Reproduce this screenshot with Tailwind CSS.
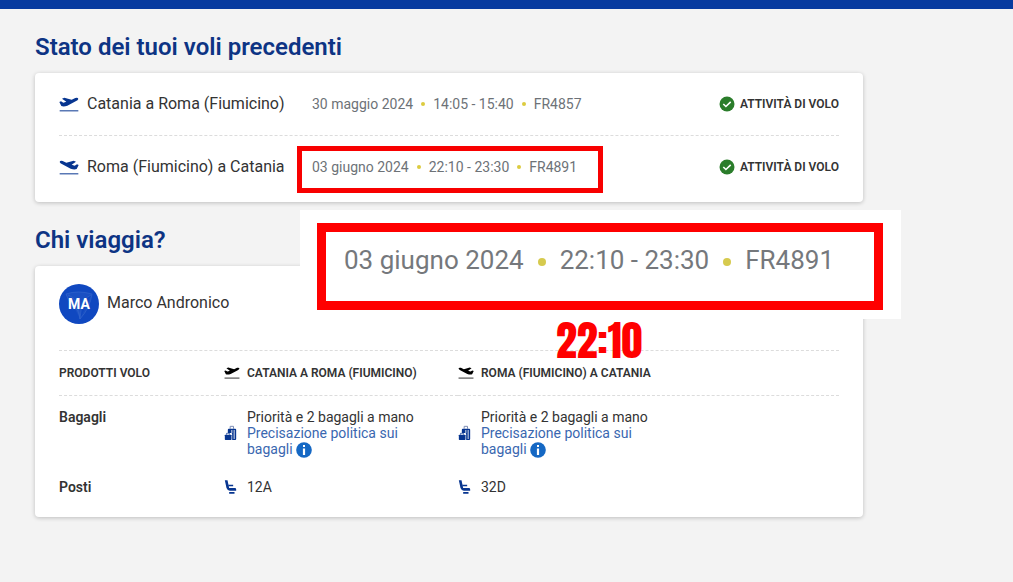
<!DOCTYPE html>
<html lang="it">
<head>
<meta charset="utf-8">
<meta name="viewport" content="width=device-width, initial-scale=1">
<title>I tuoi voli</title>
<script src="https://cdn.jsdelivr.net/npm/@tailwindcss/browser@4"></script>
</head>
<body class="relative min-h-screen bg-[#f3f3f3] font-['Roboto',sans-serif] text-[#333333]">
<svg class="hidden" aria-hidden="true">
  <symbol id="departure" viewBox="0 0 60 45">
    <path d="M1 15 L6 13 L13 17 L22 14 L9 5 L16 2 L38 8 L49 3 Q57 1 58 6 Q57 10 50 13 L25 26 Q14 30 7 27 Z"/>
    <path d="M2 40h56v3H2z"/>
  </symbol>
  <symbol id="arrival" viewBox="0 0 60 45">
    <path d="M59 15 L54 13 L47 17 L38 14 L51 5 L44 2 L22 8 L11 3 Q3 1 2 6 Q3 10 10 13 L35 26 Q46 30 53 27 Z"/>
    <path d="M2 40h56v3H2z"/>
  </symbol>
  <symbol id="check" viewBox="0 0 16 16">
    <circle cx="8" cy="8" r="7.5" fill="#2b7d2b"/>
    <path d="M4.3 8l2.6 2.5 4.8-4.6" fill="none" stroke="#fff" stroke-width="1.6"/>
  </symbol>
  <symbol id="bags" viewBox="0 0 36 48">
    <path d="M17 11V4h10v7" fill="none" stroke="#7d8db5" stroke-width="3"/>
    <path d="M13 11h19q3 0 3 3v28q0 3-3 3H23V27q0-3-3-3H10v-10q0-3 3-3z"/>
    <path d="M22 15v9M29 15v27" stroke="#fff" stroke-width="2.500"/>
    <path d="M3 29h16q2 0 2 2v12q0 2-2 2H3q-2 0-2-2V31q0-2 2-2z"/>
    <path d="M6 29v-4h9v4" fill="none" stroke="#073590" stroke-width="2"/>
  </symbol>
  <symbol id="seat" viewBox="0 0 36 42">
    <path d="M1 1h8l5 23H6z"/>
    <path d="M11 14h15v5H12zM11 24h20q4 0 4 4v4H16q-7 0-10-8zM14 36h16v5H14z"/>
  </symbol>
  <symbol id="info" viewBox="0 0 16 16">
    <circle cx="8" cy="8" r="7.8" fill="#1568c4"/>
    <path d="M7 3h2v2H7zM6.9 6.500h2.200V13H6.900z" fill="#fff"/>
  </symbol>
</svg>

<header class="h-[9px] bg-[#073b9f]"></header>

<main class="w-full max-w-[898px] px-[35px] pt-5">
  <section>
    <h1 class="text-2xl leading-9 font-semibold text-[#0d3484]">Stato dei tuoi voli precedenti</h1>
    <ul class="mt-2 rounded bg-white px-6 pb-1 shadow-[0_1px_4px_rgba(0,0,0,0.22)]">
      <li class="flex h-[63px] items-center border-b border-dashed border-[#dcdcdc]">
        <svg class="h-[15px] w-5 shrink-0 fill-[#073590]"><use href="#departure"/></svg>
        <span class="ml-2 w-[225px]">Catania a Roma (Fiumicino)</span>
        <span class="flex items-center gap-2 text-sm text-[#6d7277]">
          <span>30 maggio 2024</span><i class="size-1 rounded-full bg-[#dccb3f]"></i>
          <span>14:05 - 15:40</span><i class="size-1 rounded-full bg-[#dccb3f]"></i>
          <span>FR4857</span>
        </span>
        <span class="ml-auto flex items-center gap-[5px] text-xs font-semibold"><svg class="size-4"><use href="#check"/></svg>ATTIVITÀ DI VOLO</span>
      </li>
      <li class="flex h-[62px] items-center">
        <svg class="h-[15px] w-5 shrink-0 fill-[#073590]"><use href="#arrival"/></svg>
        <span class="ml-2 w-[225px]">Roma (Fiumicino) a Catania</span>
        <span class="flex items-center gap-2 text-sm text-[#6d7277]">
          <span>03 giugno 2024</span><i class="size-1 rounded-full bg-[#dccb3f]"></i>
          <span>22:10 - 23:30</span><i class="size-1 rounded-full bg-[#dccb3f]"></i>
          <span>FR4891</span>
        </span>
        <span class="ml-auto flex items-center gap-[5px] text-xs font-semibold"><svg class="size-4"><use href="#check"/></svg>ATTIVITÀ DI VOLO</span>
      </li>
    </ul>
  </section>

  <section class="mt-5">
    <h2 class="text-2xl leading-9 font-semibold text-[#0d3484]">Chi viaggia?</h2>
    <div class="mt-2 rounded bg-white px-6 pb-[14px] shadow-[0_1px_4px_rgba(0,0,0,0.22)]">
      <div class="flex h-[85px] items-start gap-2 border-b border-dashed border-[#dcdcdc] pt-[18px]">
        <div class="grid size-10 place-items-center rounded-full bg-[#1048c0] text-sm font-bold text-white">
          <svg class="col-start-1 row-start-1 size-10" viewBox="0 0 40 40" fill="#1a50c3" stroke="#3264cb" stroke-width="0.7"><path d="M7 10q12-4 26 0-2 14-12 25-1-9-7-14-5-4-7-11zM9 11q10 2 12 24M32 11q-10 3-11 24"/></svg>
          <span class="col-start-1 row-start-1">MA</span>
        </div>
        <span class="leading-[38px]">Marco Andronico</span>
      </div>
      <table class="w-full table-fixed border-collapse text-left text-sm">
        <colgroup><col class="w-[165px]"><col class="w-[234px]"><col></colgroup>
        <thead>
          <tr class="h-11 border-b border-dashed border-[#dcdcdc] text-xs">
            <th class="font-semibold" scope="col">PRODOTTI VOLO</th>
            <th class="font-semibold" scope="col"><span class="flex items-center gap-[7px]"><svg class="h-3 w-4 fill-black"><use href="#departure"/></svg>CATANIA A ROMA (FIUMICINO)</span></th>
            <th class="font-semibold" scope="col"><span class="flex items-center gap-[7px]"><svg class="h-3 w-4 fill-black"><use href="#arrival"/></svg>ROMA (FIUMICINO) A CATANIA</span></th>
          </tr>
        </thead>
        <tbody>
          <tr class="h-[76px] align-top leading-4">
            <th class="pt-[13px] font-semibold" scope="row">Bagagli</th>
            <td class="pt-[13px]">
              <div class="flex items-center gap-[10px]">
                <svg class="h-4 w-[13px] shrink-0 fill-[#073590]"><use href="#bags"/></svg>
                <div class="w-[180px]"><p>Priorità e 2 bagagli a mano</p><a href="#bagagli" class="block text-[#3a67b0]">Precisazione politica sui bagagli <svg class="inline size-4 align-[-4px]"><use href="#info"/></svg></a></div>
              </div>
            </td>
            <td class="pt-[13px]">
              <div class="flex items-center gap-[10px]">
                <svg class="h-4 w-[13px] shrink-0 fill-[#073590]"><use href="#bags"/></svg>
                <div class="w-[180px]"><p>Priorità e 2 bagagli a mano</p><a href="#bagagli" class="block text-[#3a67b0]">Precisazione politica sui bagagli <svg class="inline size-4 align-[-4px]"><use href="#info"/></svg></a></div>
              </div>
            </td>
          </tr>
          <tr class="h-8">
            <th class="font-semibold" scope="row">Posti</th>
            <td><span class="flex items-center gap-[10px]"><svg class="h-[14px] w-[13px] fill-[#073590]"><use href="#seat"/></svg>12A</span></td>
            <td><span class="flex items-center gap-[10px]"><svg class="h-[14px] w-[13px] fill-[#073590]"><use href="#seat"/></svg>32D</span></td>
          </tr>
        </tbody>
      </table>
    </div>
  </section>
</main>

<!-- Annotations drawn over the page -->
<div class="absolute top-[146px] left-[297px] h-[47px] w-[306px] border-[5px] border-[#f80000]"></div>
<aside class="absolute top-[210px] left-[300px] h-[109px] w-[601px] bg-white px-[17px] pt-[13px]">
  <div class="flex h-[87px] w-[566px] items-start gap-[14px] border-[9px] border-[#ff0000] pt-[10px] pl-[18px] text-[26px] leading-9 text-[#75787c]">
    <span>03 giugno 2024</span><i class="mt-4 size-2 rounded-full bg-[#d6ca4e]"></i>
    <span>22:10 - 23:30</span><i class="mt-4 size-2 rounded-full bg-[#d6ca4e]"></i>
    <span>FR4891</span>
  </div>
</aside>
<strong class="absolute top-[321px] left-[556px] font-['Impact','Anton',sans-serif] text-[42px] leading-10 font-normal text-[#ff0000]">22:10</strong>
</body>
</html>
